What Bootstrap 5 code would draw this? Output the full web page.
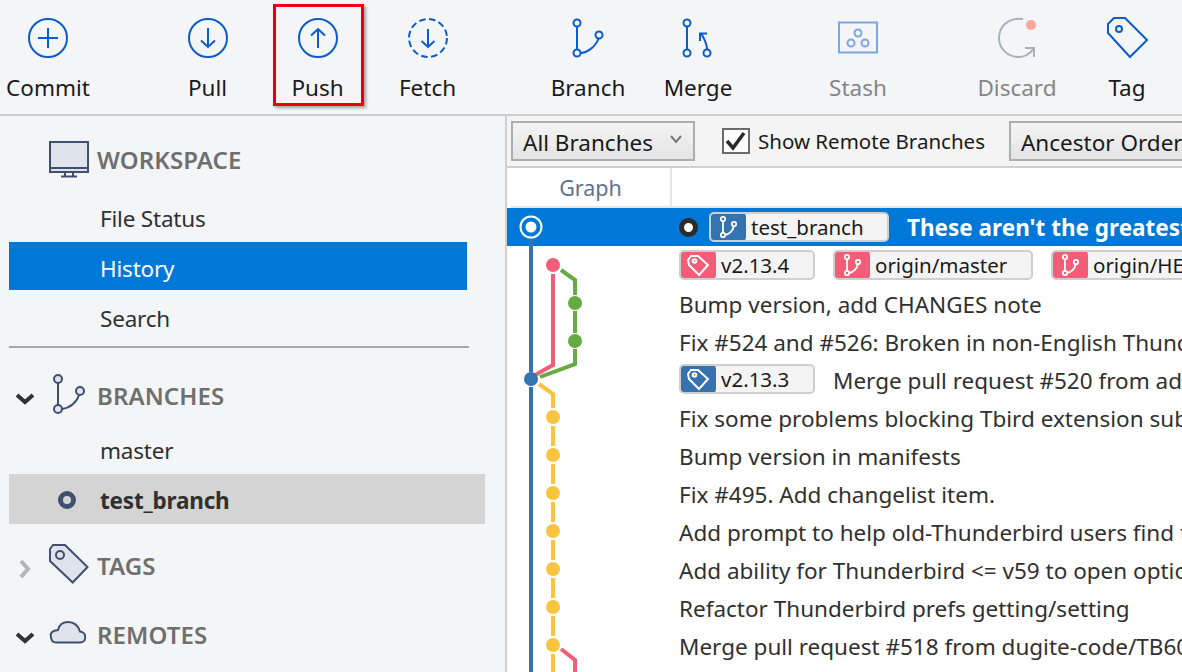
<!DOCTYPE html>
<html lang="en">
<head>
    <meta charset="UTF-8">
    <meta name="viewport" content="width=device-width, initial-scale=1.0">
    <link href="https://cdn.jsdelivr.net/npm/bootstrap@5.3.3/dist/css/bootstrap.min.css" rel="stylesheet">
    <script src="https://cdn.jsdelivr.net/npm/bootstrap@5.3.3/dist/js/bootstrap.bundle.min.js"></script>
    <title>History</title>
    <style>
        html, body { height: 672px; overflow: hidden; }
        body { font-family: "Noto Sans", "Open Sans", sans-serif; background: #fff; color: #303030; }
        svg { overflow: visible; }
        .toolbar { height: 116px; background: #f4f5f7; border-bottom: 2px solid #cfcfcf; }
        .tool-strip { margin-left: -7px; width: 1189px; }
        .tool-btn { width: 110px; height: 114px; position: relative; flex: none; padding-top: 14px; font-size: 22.5px; line-height: 30px; color: #1a1a1a; }
        .tool-btn svg { display: block; height: 48px; width: 48px; margin-bottom: 11px; }
        .tool-btn.muted-tool { color: #858585; }
        .tool-gap { width: 49.5px; flex: none; }
        .tool-gap.g2 { width: 50.5px; }
        .tool-gap.g3 { width: 50px; }
        .tool-gap.g4 { width: 49px; }
        .push-mark { position: absolute; left: 10.5px; right: 8.5px; top: 4px; height: 102px; border: 3px solid #e8000c; box-shadow: 2px 2px 3px rgba(0,0,0,.35); }
        .main-area { height: 556px; }
        .side-pane { width: 507px; flex: none; background: #f4f5f7; border-right: 2px solid #d0d0d0; padding: 14px 0 0 9px; overflow: hidden; }
        .side-head { height: 60px; color: #6f6f6f; font-size: 24px; font-weight: 600; letter-spacing: .1px; }
        .side-head.first { margin-bottom: 4px; }
        .side-head.tags { margin-top: 12px; margin-bottom: 9px; }
        .chev-cell { width: 40px; flex: none; }
        .head-icon { width: 48px; flex: none; }
        .side-row { height: 48px; padding-left: 91px; font-size: 22.5px; line-height: 50px; color: #303030; letter-spacing: -.2px; }
        .side-row.on { width: 458px; background: #0078d7; color: #fff; line-height: 54px; }
        .side-row.below { line-height: 58px; }
        .side-row.now { width: 476px; height: 50px; background: #d4d4d4; font-weight: 700; position: relative; line-height: 54px; }
        .side-rule { width: 460px; height: 2px; background: #a5a5a5; margin: 8px 0 18px; }
        .now-dot { position: absolute; left: 49px; top: 17px; width: 18px; height: 18px; border: 5px solid #3f4f6f; border-radius: 50%; }
        .log-pane { min-width: 0; overflow: hidden; position: relative; }
        .filter-bar { height: 52px; background: #f4f4f4; border-bottom: 2px solid #cfcfcf; padding: 5px 0 0 4px; white-space: nowrap; font-size: 22.5px; }
        .fake-select { height: 40px; border: 2px solid #adadad; background: linear-gradient(#f4f4f4, #e4e4e4); padding: 0 10px; line-height: 40px; color: #1a1a1a; flex: none; }
        .fake-select.branches { width: 184px; position: relative; }
        .sel-chev { position: absolute; right: 11px; top: 12px; }
        .fake-select.order { width: 240px; margin-left: 24px; }
        .remote-check { margin-left: 27px; margin-top: 7px; }
        .check-box { width: 28px; height: 26px; border: 2px solid #6b6b6b; background: #fff; flex: none; }
        .check-text { margin-left: 8px; font-size: 20.5px; line-height: 26px; color: #1a1a1a; }
        .col-heads { height: 38px; }
        .graph-head { width: 165px; flex: none; text-align: center; color: #5c7392; font-size: 21.5px; line-height: 40px; border-right: 2px solid #e8e8e8; padding-left: 4px; }
        .head-line { height: 2px; background: #e6e6e6; margin-left: 4px; }
        .commit-row { height: 38px; padding-left: 172px; font-size: 22.5px; white-space: nowrap; color: #303030; gap: 18px; }
        .commit-row.sel { background: #0078d7; color: #fff; font-weight: 700; gap: 0; }
        .commit-text { padding-top: 4px; }
        .head-dot { width: 19px; height: 19px; border: 5px solid #2c2c2c; background: #fff; border-radius: 50%; margin-right: 11px; flex: none; }
        .ref-chip { height: 30px; border: 2px solid #cfcfcf; border-radius: 5px; background: #f4f4f4; color: #1a1a1a; font-size: 20.5px; font-weight: 400; line-height: 27px; flex: none; overflow: hidden; }
        .ref-icon { width: 37px; height: 30px; margin: -2px 0 0 -2px; flex: none; border-radius: 5px; }
        .ref-icon svg { width: 37px; height: 30px; display: block; }
        .ref-name { padding-left: 5px; }
        .tone-pink { background: #f25d78; }
        .tone-blue { background: #3572b0; }
        .w-tag { width: 136px; }
        .w-cur { width: 180px; }
        .w-org { width: 200px; }
        .sel-msg { margin-left: 18px; padding-top: 2px; }
        .graph-svg { position: absolute; left: 0; top: 0; width: 165px; height: 556px; pointer-events: none; }
    </style>
</head>
<body>
    <div class="toolbar overflow-hidden">
        <div class="d-flex tool-strip">
            <div class="tool-btn d-flex flex-column align-items-center">
                <svg viewBox="0 0 48 48" fill="none" stroke="#0b5ccc" stroke-width="2"><circle cx="24" cy="24" r="19"/><path d="M14 24H34M24 14V34"/></svg>
                <span>Commit</span>
            </div>
            <div class="tool-gap"></div>
            <div class="tool-btn d-flex flex-column align-items-center">
                <svg viewBox="0 0 48 48" fill="none" stroke="#0b5ccc" stroke-width="2"><circle cx="24" cy="24" r="19"/><path d="M24 14V33M17 26.500 24 33 31 26.500"/></svg>
                <span>Pull</span>
            </div>
            <div class="tool-btn d-flex flex-column align-items-center">
                <svg viewBox="0 0 48 48" fill="none" stroke="#0b5ccc" stroke-width="2"><circle cx="24" cy="24" r="19"/><path d="M24 15V34M17 21.500 24 15 31 21.500"/></svg>
                <span>Push</span>
                <div class="push-mark"></div>
            </div>
            <div class="tool-btn d-flex flex-column align-items-center">
                <svg viewBox="0 0 48 48" fill="none" stroke="#0b5ccc" stroke-width="2"><circle cx="24" cy="24" r="19" stroke-dasharray="6.500 3.500"/><path d="M24 15V33M17.500 27 24 33 30.500 27"/></svg>
                <span>Fetch</span>
            </div>
            <div class="tool-gap g2"></div>
            <div class="tool-btn d-flex flex-column align-items-center">
                <svg viewBox="0 0 48 48" fill="none" stroke="#0b5ccc" stroke-width="2"><circle cx="13" cy="9" r="3.500"/><circle cx="13" cy="39" r="3.500"/><circle cx="35" cy="21" r="3.500"/><path d="M13 12.500V35.500M16.500 39C24 38.500 32 32 34.500 24.500"/></svg>
                <span>Branch</span>
            </div>
            <div class="tool-btn d-flex flex-column align-items-center">
                <svg viewBox="0 0 48 48" fill="none" stroke="#0b5ccc" stroke-width="2"><circle cx="13" cy="9" r="3.500"/><circle cx="13" cy="39" r="3.500"/><circle cx="33" cy="39" r="3.500"/><path d="M13 12.500V35.500M33 35.500C33 29 30 25 27.500 20M26 27V19.500H33"/></svg>
                <span>Merge</span>
            </div>
            <div class="tool-gap g3"></div>
            <div class="tool-btn muted-tool d-flex flex-column align-items-center">
                <svg viewBox="0 0 48 48" fill="none" stroke="#7ea6e6" stroke-width="2"><rect x="5" y="8.500" width="38" height="30"/><circle cx="24" cy="19" r="3.500"/><circle cx="17" cy="29" r="3.500"/><circle cx="31" cy="29" r="3.500"/></svg>
                <span>Stash</span>
            </div>
            <div class="tool-gap g4"></div>
            <div class="tool-btn muted-tool d-flex flex-column align-items-center">
                <svg viewBox="0 0 48 48" fill="none" stroke="#a9b0bd" stroke-width="2"><path d="M30 5C15 3 6 13 6 24C6 35 15 43 26 43C32 43 37 40 41 34"/><path d="M32 34H41V43"/><circle cx="38" cy="11" r="5" fill="#f8a899" stroke="none"/></svg>
                <span>Discard</span>
            </div>
            <div class="tool-btn d-flex flex-column align-items-center">
                <svg viewBox="0 0 48 48" fill="none" stroke="#0b5ccc" stroke-width="2"><path d="M5 10 11 4H22L44 26 27 43 5 19Z"/><circle cx="16" cy="15" r="3"/></svg>
                <span>Tag</span>
            </div>
        </div>
    </div>

    <div class="d-flex main-area">
        <div class="side-pane">
            <div class="side-head first d-flex align-items-center">
                <div class="chev-cell"></div>
                <svg class="head-icon" width="48" height="38" viewBox="0 0 48 38" fill="none" stroke="#3f4f6f" stroke-width="2"><rect x="1" y="1" width="38" height="30" fill="#dfe3ec"/><path d="M1 27H39M16 31V35M24 31V35M12 35.500H28"/></svg>
                <span>WORKSPACE</span>
            </div>
            <div class="side-row">File Status</div>
            <div class="side-row on">History</div>
            <div class="side-row below">Search</div>
            <div class="side-rule"></div>
            <div class="side-head d-flex align-items-center">
                <div class="chev-cell"><svg width="32" height="18" viewBox="0 0 32 18" fill="none" stroke="#333" stroke-width="4"><path d="M8 5 16 12 24 5"/></svg></div>
                <svg class="head-icon" width="48" height="42" viewBox="0 0 48 42" fill="none" stroke="#3f4f6f" stroke-width="2"><circle cx="9" cy="4" r="4" fill="#dfe3ec"/><circle cx="9" cy="34" r="4" fill="#dfe3ec"/><circle cx="31" cy="16" r="4" fill="#dfe3ec"/><path d="M9 8V30M13 34C21 33 28 27 30 20"/></svg>
                <span>BRANCHES</span>
            </div>
            <div class="side-row">master</div>
            <div class="side-row now"><span class="now-dot"></span>test_branch</div>
            <div class="side-head tags d-flex align-items-center">
                <div class="chev-cell"><svg width="32" height="22" viewBox="0 0 32 22" fill="none" stroke="#b5b5b5" stroke-width="4"><path d="M12 3 19 11 12 19"/></svg></div>
                <svg class="head-icon" width="48" height="42" viewBox="0 0 48 42" fill="none" stroke="#3f4f6f" stroke-width="2"><path d="M1 4 4 0H16L38.500 22 23.700 37.500 1 16Z" fill="#dfe3ec"/><circle cx="11" cy="10" r="4"/></svg>
                <span>TAGS</span>
            </div>
            <div class="side-head d-flex align-items-center">
                <div class="chev-cell"><svg width="32" height="18" viewBox="0 0 32 18" fill="none" stroke="#333" stroke-width="4"><path d="M8 5 16 12 24 5"/></svg></div>
                <svg class="head-icon" width="48" height="26" viewBox="0 0 48 26" fill="none" stroke="#3f4f6f" stroke-width="2"><path d="M7 20.500H31C38 20.500 38 10 31 9.500C29 3 24 0 19 0C14 0 10 3 9 8C3 8.500 1 11.500 1.800 14C2 18 4 20.500 7 20.500Z" fill="#dfe3ec"/></svg>
                <span>REMOTES</span>
            </div>
        </div>

        <div class="log-pane flex-grow-1">
            <div class="filter-bar d-flex align-items-start">
                <div class="fake-select branches">All Branches
                    <svg class="sel-chev" width="12" height="9" viewBox="0 0 12 9" fill="none" stroke="#777" stroke-width="2"><path d="M1 1 6 7 11 1"/></svg>
                </div>
                <div class="remote-check d-flex align-items-center">
                    <span class="check-box d-flex align-items-center justify-content-center"><svg width="22" height="20" viewBox="0 0 22 20" fill="none" stroke="#2a2a2a" stroke-width="3.500"><path d="M2 10 8 17 19 2"/></svg></span>
                    <span class="check-text">Show Remote Branches</span>
                </div>
                <div class="fake-select order">Ancestor Order</div>
            </div>
            <div class="col-heads d-flex"><div class="graph-head">Graph</div></div>
            <div class="head-line"></div>

            <div class="commit-row sel d-flex align-items-center">
                <span class="head-dot"></span>
                <span class="ref-chip w-cur d-flex">
                    <span class="ref-icon tone-blue"><svg viewBox="0 0 37 30" fill="none" stroke="#fff" stroke-width="1.800"><circle cx="14" cy="7" r="2.200"/><circle cx="14" cy="23" r="2.200"/><circle cx="25" cy="12" r="2.200"/><path d="M14 9V21M16 23C20 22.500 24 19 24.800 14"/></svg></span>
                    <span class="ref-name">test_branch</span>
                </span>
                <span class="sel-msg">These aren't the greatest changes, but they work</span>
            </div>
            <div class="commit-row d-flex align-items-center">
                <span class="ref-chip w-tag d-flex">
                    <span class="ref-icon tone-pink"><svg viewBox="0 0 37 30" fill="none" stroke="#fff" stroke-width="2"><path d="M9 10 12 6H19L29 15 20 25 10 15Z"/><circle cx="15.500" cy="11" r="1.800"/></svg></span>
                    <span class="ref-name">v2.13.4</span>
                </span>
                <span class="ref-chip w-org d-flex">
                    <span class="ref-icon tone-pink"><svg viewBox="0 0 37 30" fill="none" stroke="#fff" stroke-width="1.800"><circle cx="14" cy="7" r="2.200"/><circle cx="14" cy="23" r="2.200"/><circle cx="25" cy="12" r="2.200"/><path d="M14 9V21M16 23C20 22.500 24 19 24.800 14"/></svg></span>
                    <span class="ref-name">origin/master</span>
                </span>
                <span class="ref-chip w-org d-flex">
                    <span class="ref-icon tone-pink"><svg viewBox="0 0 37 30" fill="none" stroke="#fff" stroke-width="1.800"><circle cx="14" cy="7" r="2.200"/><circle cx="14" cy="23" r="2.200"/><circle cx="25" cy="12" r="2.200"/><path d="M14 9V21M16 23C20 22.500 24 19 24.800 14"/></svg></span>
                    <span class="ref-name">origin/HEAD</span>
                </span>
            </div>
            <div class="commit-row d-flex align-items-center"><span class="commit-text">Bump version, add CHANGES note</span></div>
            <div class="commit-row d-flex align-items-center"><span class="commit-text">Fix #524 and #526: Broken in non-English Thunderbird</span></div>
            <div class="commit-row d-flex align-items-center">
                <span class="ref-chip w-tag d-flex">
                    <span class="ref-icon tone-blue"><svg viewBox="0 0 37 30" fill="none" stroke="#fff" stroke-width="2"><path d="M9 10 12 6H19L29 15 20 25 10 15Z"/><circle cx="15.500" cy="11" r="1.800"/></svg></span>
                    <span class="ref-name">v2.13.3</span>
                </span>
                <span class="commit-text">Merge pull request #520 from adam-p/fix</span>
            </div>
            <div class="commit-row d-flex align-items-center"><span class="commit-text">Fix some problems blocking Tbird extension submission</span></div>
            <div class="commit-row d-flex align-items-center"><span class="commit-text">Bump version in manifests</span></div>
            <div class="commit-row d-flex align-items-center"><span class="commit-text">Fix #495. Add changelist item.</span></div>
            <div class="commit-row d-flex align-items-center"><span class="commit-text">Add prompt to help old-Thunderbird users find the options</span></div>
            <div class="commit-row d-flex align-items-center"><span class="commit-text">Add ability for Thunderbird &lt;= v59 to open options page</span></div>
            <div class="commit-row d-flex align-items-center"><span class="commit-text">Refactor Thunderbird prefs getting/setting</span></div>
            <div class="commit-row d-flex align-items-center"><span class="commit-text">Merge pull request #518 from dugite-code/TB60-fix</span></div>

            <svg class="graph-svg" viewBox="507 116 165 556" fill="none" stroke-width="4">
                <path d="M531 240V372M531 387V672" stroke="#3572b0"/>
                <path d="M553 274V365L535 375" stroke="#f25d78"/>
                <path d="M561 270 575 280V295M575 311V333M575 349V364L540 377" stroke="#66aa44"/>
                <path d="M539 384 553 394V408M553 426V446M553 464V484M553 502V522M553 540V560M553 578V598M553 616V636M553 654V672" stroke="#f9c440"/>
                <path d="M561 649 575 660V672" stroke="#f25d78"/>
                <circle cx="531" cy="227" r="10.500" stroke="#fff" stroke-width="2"/>
                <circle cx="531" cy="227" r="5.500" fill="#fff" stroke="none"/>
                <circle cx="553" cy="265" r="7" fill="#f25d78" stroke="none"/>
                <circle cx="575" cy="303" r="7" fill="#66aa44" stroke="none"/>
                <circle cx="575" cy="341" r="7" fill="#66aa44" stroke="none"/>
                <circle cx="531" cy="379" r="7" fill="#3572b0" stroke="none"/>
                <g fill="#f9c440" stroke="none">
                    <circle cx="553" cy="417" r="7"/><circle cx="553" cy="455" r="7"/><circle cx="553" cy="493" r="7"/><circle cx="553" cy="531" r="7"/><circle cx="553" cy="569" r="7"/><circle cx="553" cy="607" r="7"/><circle cx="553" cy="645" r="7"/>
                </g>
            </svg>
        </div>
    </div>
</body>
</html>
